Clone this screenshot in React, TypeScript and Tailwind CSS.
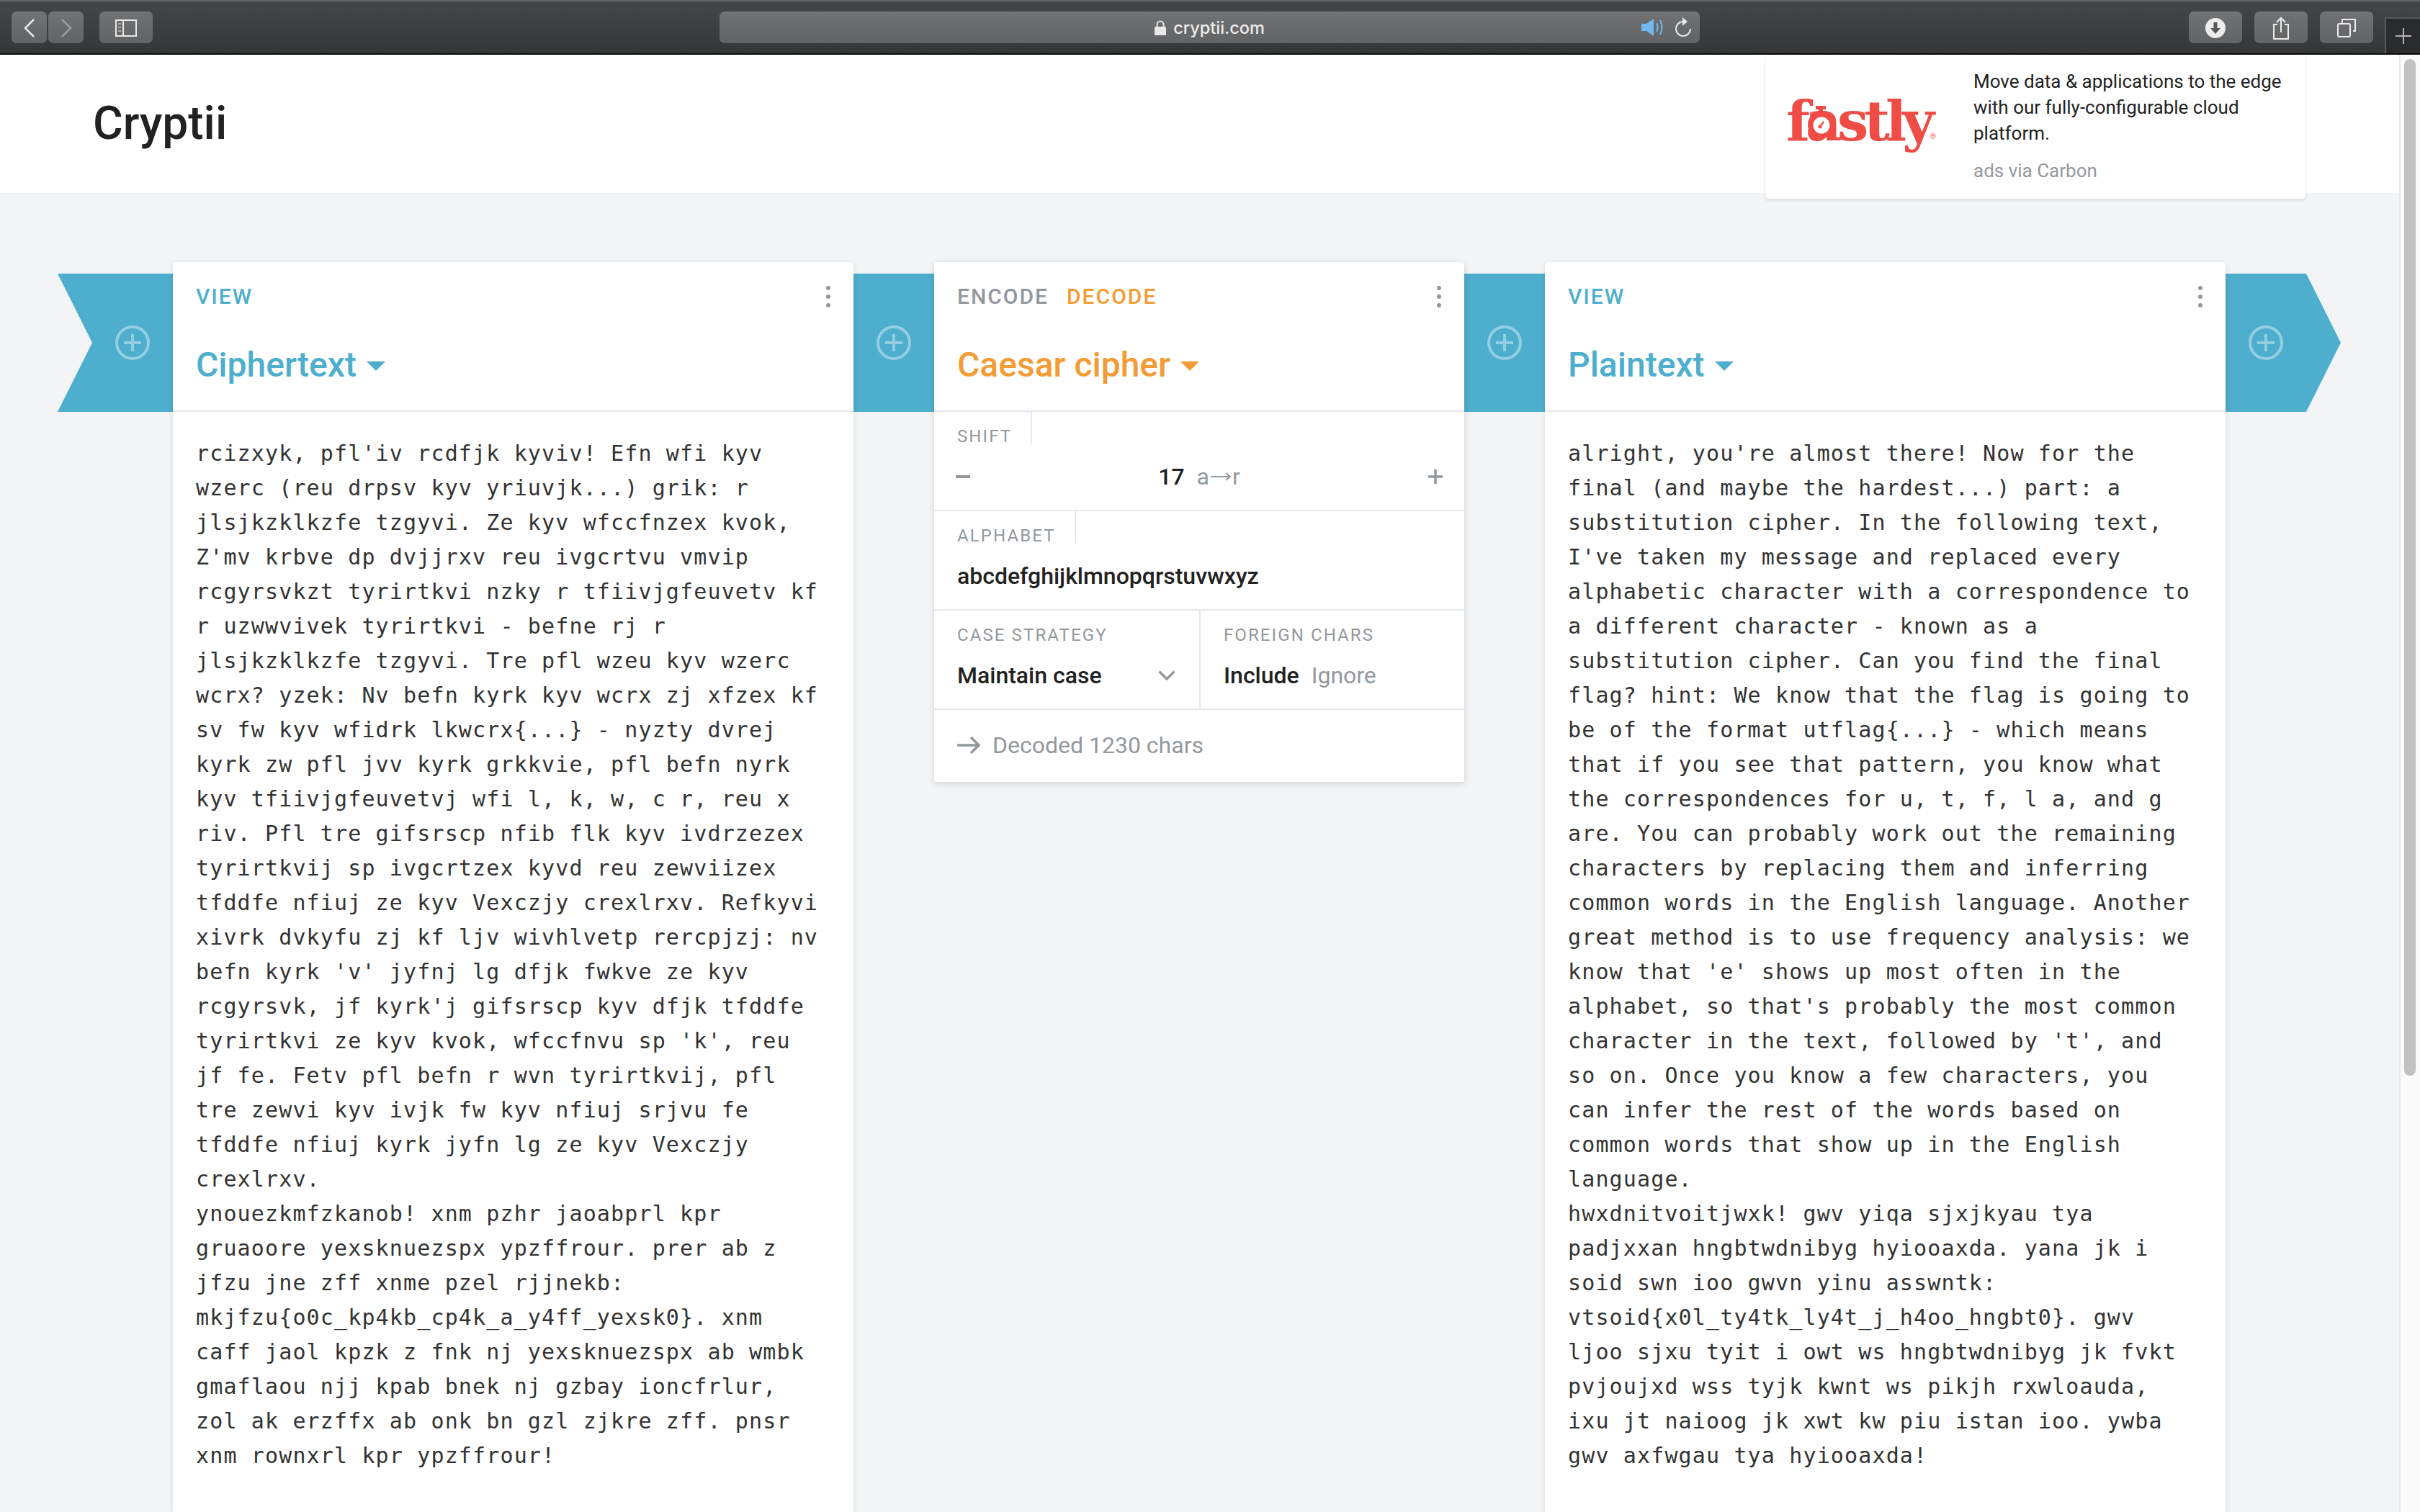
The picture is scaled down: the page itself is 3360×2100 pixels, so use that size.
import React from "react";

const CIPHER = `rcizxyk, pfl'iv rcdfjk kyviv! Efn wfi kyv wzerc (reu drpsv kyv yriuvjk...) grik: r jlsjkzklkzfe tzgyvi. Ze kyv wfccfnzex kvok, Z'mv krbve dp dvjjrxv reu ivgcrtvu vmvip rcgyrsvkzt tyrirtkvi nzky r tfiivjgfeuvetv kf r uzwwvivek tyrirtkvi - befne rj r jlsjkzklkzfe tzgyvi. Tre pfl wzeu kyv wzerc wcrx? yzek: Nv befn kyrk kyv wcrx zj xfzex kf sv fw kyv wfidrk lkwcrx{...} - nyzty dvrej kyrk zw pfl jvv kyrk grkkvie, pfl befn nyrk kyv tfiivjgfeuvetvj wfi l, k, w, c r, reu x riv. Pfl tre gifsrscp nfib flk kyv ivdrzezex tyrirtkvij sp ivgcrtzex kyvd reu zewviizex tfddfe nfiuj ze kyv Vexczjy crexlrxv. Refkyvi xivrk dvkyfu zj kf ljv wivhlvetp rercpjzj: nv befn kyrk 'v' jyfnj lg dfjk fwkve ze kyv rcgyrsvk, jf kyrk'j gifsrscp kyv dfjk tfddfe tyrirtkvi ze kyv kvok, wfccfnvu sp 'k', reu jf fe. Fetv pfl befn r wvn tyrirtkvij, pfl tre zewvi kyv ivjk fw kyv nfiuj srjvu fe tfddfe nfiuj kyrk jyfn lg ze kyv Vexczjy crexlrxv.
ynouezkmfzkanob! xnm pzhr jaoabprl kpr gruaoore yexsknuezspx ypzffrour. prer ab z jfzu jne zff xnme pzel rjjnekb: mkjfzu{o0c_kp4kb_cp4k_a_y4ff_yexsk0}. xnm caff jaol kpzk z fnk nj yexsknuezspx ab wmbk gmaflaou njj kpab bnek nj gzbay ioncfrlur, zol ak erzffx ab onk bn gzl zjkre zff. pnsr xnm rownxrl kpr ypzffrour!`;

const PLAIN = `alright, you're almost there! Now for the final (and maybe the hardest...) part: a substitution cipher. In the following text, I've taken my message and replaced every alphabetic character with a correspondence to a different character - known as a substitution cipher. Can you find the final flag? hint: We know that the flag is going to be of the format utflag{...} - which means that if you see that pattern, you know what the correspondences for u, t, f, l a, and g are. You can probably work out the remaining characters by replacing them and inferring common words in the English language. Another great method is to use frequency analysis: we know that 'e' shows up most often in the alphabet, so that's probably the most common character in the text, followed by 't', and so on. Once you know a few characters, you can infer the rest of the words based on common words that show up in the English language.
hwxdnitvoitjwxk! gwv yiqa sjxjkyau tya padjxxan hngbtwdnibyg hyiooaxda. yana jk i soid swn ioo gwvn yinu asswntk: vtsoid{x0l_ty4tk_ly4t_j_h4oo_hngbt0}. gwv ljoo sjxu tyit i owt ws hngbtwdnibyg jk fvkt pvjoujxd wss tyjk kwnt ws pikjh rxwloauda, ixu jt naioog jk xwt kw piu istan ioo. ywba gwv axfwgau tya hyiooaxda!`;

function ToolBtn({ w, children }: { w: string; children?: React.ReactNode }) {
  return (
    <div className={`${w} h-[44px] rounded-[7px] bg-gradient-to-b from-[#717274] to-[#626365] border-t border-[#7d7e80] flex items-center justify-center`}>
      {children}
    </div>
  );
}

function AddCircle() {
  return (
    <svg width="48" height="48" viewBox="0 0 48 48" fill="none" stroke="#95cee1" strokeWidth="4">
      <circle cx="24" cy="24" r="22" />
      <path d="M12 24h24M24 12v24" />
    </svg>
  );
}

function Dots() {
  return (
    <div className="flex flex-col gap-[6px]">
      <div className="w-[6px] h-[6px] rounded-full bg-[#93989c]" />
      <div className="w-[6px] h-[6px] rounded-full bg-[#93989c]" />
      <div className="w-[6px] h-[6px] rounded-full bg-[#93989c]" />
    </div>
  );
}

function Ribbon({ kind }: { kind: "start" | "mid" | "end" }) {
  if (kind === "start")
    return (
      <div className="w-[160px] h-[192px] mt-4 bg-[#4eaecd] shrink-0 flex items-center justify-end pr-[32px] [clip-path:polygon(0_0,100%_0,100%_100%,0_100%,48px_50%)]">
        <AddCircle />
      </div>
    );
  if (kind === "end")
    return (
      <div className="w-[160px] h-[192px] mt-4 bg-[#4eaecd] shrink-0 flex items-center pl-[32px] [clip-path:polygon(0_0,112px_0,100%_50%,112px_100%,0_100%)]">
        <AddCircle />
      </div>
    );
  return (
    <div className="w-[112px] h-[192px] mt-4 bg-[#4eaecd] shrink-0 flex items-center justify-center">
      <AddCircle />
    </div>
  );
}

function Caret({ color }: { color: string }) {
  return (
    <svg width="26" height="13" viewBox="0 0 26 13" className="ml-[14px] mt-[2px]">
      <path d="M0 0h26L13 13z" fill={color} />
    </svg>
  );
}

function CardHead({ top, title, color, caret }: { top: React.ReactNode; title: string; color: string; caret: string }) {
  return (
    <div className="h-[208px] border-b-2 border-[#e4e8ec] pl-8 pr-[32px] flex flex-col">
      <div className="flex items-center justify-between h-[36px] mt-[30px]">
        {top}
        <Dots />
      </div>
      <div className={`${color} flex items-center mt-[45px] text-[48px] leading-[64px] font-medium`}>
        {title}
        <Caret color={caret} />
      </div>
    </div>
  );
}

function ViewCard({ text, title }: { text: string; title: string }) {
  return (
    <div className="w-[945px] shrink-0 bg-white rounded-t-[4px] shadow-[0_2px_8px_rgba(0,0,0,0.1)] relative z-10 h-[1736px]">
      <CardHead
        top={<span className="text-[30px] leading-[36px] tracking-[2px] font-medium text-[#4eaecd]">VIEW</span>}
        title={title}
        color="text-[#4eaecd]"
        caret="#4eaecd"
      />
      <div className="px-8 pt-[34px] text-[30px] tracking-[1.14px] leading-[48px] text-[#333] whitespace-pre-wrap font-['DejaVu_Sans_Mono',monospace]">
        {text}
      </div>
    </div>
  );
}

function FieldLabel({ children, line }: { children: string; line?: boolean }) {
  return (
    <div className={`inline-block pt-4 h-[44px] pl-8 pr-[26px] text-[24px] leading-[36px] tracking-[2.1px] text-[#93989c] ${line ? "border-r-2 border-[#e4e8ec]" : ""}`}>
      {children}
    </div>
  );
}

function CipherCard() {
  return (
    <div className="w-[736px] h-[722px] shrink-0 bg-white rounded-[4px] shadow-[0_2px_8px_rgba(0,0,0,0.15)] relative z-10 flex flex-col">
      <CardHead
        top={
          <div className="flex gap-[25px] text-[30px] leading-[36px] tracking-[2px] font-medium">
            <span className="text-[#93989c]">ENCODE</span>
            <span className="text-[#f39c35]">DECODE</span>
          </div>
        }
        title="Caesar cipher"
        color="text-[#f39c35]"
        caret="#f39c35"
      />
      <div className="h-[138px] border-b-2 border-[#e4e8ec]">
        <FieldLabel line>SHIFT</FieldLabel>
        <div className="flex items-center justify-between pl-[30px] pr-[30px] h-[48px] mt-[17px] text-[32px] leading-[48px]">
          <div className="w-[20px] h-[4px] bg-[#93989c]" />
          <div className="flex items-center gap-[17px]">
            <span className="text-[#222] font-medium">17</span>
            <span className="text-[#93989c] flex items-center">
              a
              <svg width="32" height="16" viewBox="0 0 32 16" fill="none" stroke="#93989c" strokeWidth="2">
                <path d="M2 8h26M23 3l6 5-6 5" />
              </svg>
              r
            </span>
          </div>
          <svg width="20" height="20" viewBox="0 0 20 20" fill="none" stroke="#93989c" strokeWidth="3.5">
            <path d="M0 10h20M10 0v20" />
          </svg>
        </div>
      </div>
      <div className="h-[138px] border-b-2 border-[#e4e8ec]">
        <FieldLabel line>ALPHABET</FieldLabel>
        <div className="pl-8 mt-[17px] text-[32px] leading-[48px] text-[#222] font-medium">abcdefghijklmnopqrstuvwxyz</div>
      </div>
      <div className="h-[138px] border-b-2 border-[#e4e8ec] flex">
        <div className="w-[370px] border-r-2 border-[#e4e8ec]">
          <FieldLabel>CASE STRATEGY</FieldLabel>
          <div className="flex items-center justify-between pl-8 pr-[33px] mt-[17px] text-[32px] leading-[48px] text-[#222] font-medium">
            Maintain case
            <svg width="24" height="14" viewBox="0 0 24 14" fill="none" stroke="#93989c" strokeWidth="3.5">
              <path d="M1.5 1.5 12 12 22.5 1.5" />
            </svg>
          </div>
        </div>
        <div className="flex-1">
          <FieldLabel>FOREIGN CHARS</FieldLabel>
          <div className="flex pl-8 gap-[17px] mt-[17px] text-[32px] leading-[48px]">
            <span className="text-[#222] font-medium">Include</span>
            <span className="text-[#93989c]">Ignore</span>
          </div>
        </div>
      </div>
      <div className="flex-1 flex items-center pl-8 pb-[3px] gap-[17px] text-[32px] text-[#93989c]">
        <svg width="32" height="26" viewBox="0 0 32 26" fill="none" stroke="#93989c" strokeWidth="3.5">
          <path d="M0 13h30M19 2l11 11-11 11" />
        </svg>
        Decoded 1230 chars
      </div>
    </div>
  );
}

function FastlyLogo() {
  return (
    <div className="relative w-[206px] h-[90px] ml-[32px] mt-[58px] shrink-0">
      <span className="absolute left-[-3px] top-[-16px] text-[77px] leading-[100px] font-bold tracking-[-6px] text-[#ef4c45] font-['DejaVu_Serif',serif]">
        fastly
      </span>
      <span className="absolute left-[197px] top-[50px] text-[10px] leading-[12px] text-[#ef4c45]">®</span>
      <svg width="40" height="52" viewBox="0 0 40 52" className="absolute left-[25px] top-[13px]">
        <rect x="13" y="0" width="14" height="5" fill="#ef4c45" />
        <rect x="17" y="3" width="6" height="8" fill="#ef4c45" />
        <circle cx="20" cy="26" r="18" fill="#ef4c45" />
        <circle cx="21" cy="27" r="11.5" fill="#fff" />
        <path d="M19 29l5-7" stroke="#ef4c45" strokeWidth="2.5" />
        <circle cx="19" cy="29" r="2.5" fill="#ef4c45" />
      </svg>
    </div>
  );
}

export default function App() {
  return (
    <div className="w-[3360px] h-[2100px] overflow-hidden flex flex-col font-['Roboto',sans-serif] bg-[#f2f4f6]">
      {/* browser toolbar */}
      <div className="h-[76px] shrink-0 flex bg-gradient-to-b from-[#454648] to-[#353638] border-t-2 border-t-[#656667] border-b-2 border-b-[#0a0a0a] pt-[14px] pl-4">
        <div className="flex gap-[2px]">
          <ToolBtn w="w-[49px]">
            <svg width="16" height="26" viewBox="0 0 16 26" fill="none" stroke="#e8e8e8" strokeWidth="2.5">
              <path d="M14 1 2 13l12 12" />
            </svg>
          </ToolBtn>
          <ToolBtn w="w-[49px]">
            <svg width="16" height="26" viewBox="0 0 16 26" fill="none" stroke="#9a9b9d" strokeWidth="2.5">
              <path d="M2 1l12 12L2 25" />
            </svg>
          </ToolBtn>
        </div>
        <div className="ml-[22px]">
          <ToolBtn w="w-[74px]">
            <svg width="30" height="24" viewBox="0 0 30 24" fill="none" stroke="#e8e8e8" strokeWidth="2">
              <rect x="1" y="1" width="28" height="22" />
              <path d="M11 1v22" />
              <path d="M4 6h4M4 11h4M4 16h4" strokeWidth="2" stroke="#aaa" />
            </svg>
          </ToolBtn>
        </div>
        <div className="ml-[787px] w-[1361px] relative shrink-0">
          <ToolBtn w="w-full">
            <div className="flex items-center gap-[10px] text-[#ececec] text-[23.5px] font-['Inter',sans-serif] font-medium leading-none">
              <svg width="16" height="21" viewBox="0 0 16 21">
                <path d="M3.5 9V6a4.5 4.5 0 0 1 9 0v3" fill="none" stroke="#e8e8e8" strokeWidth="2" />
                <rect x="0" y="9" width="16" height="12" rx="1" fill="#e8e8e8" />
              </svg>
              cryptii.com
            </div>
          </ToolBtn>
          <div className="absolute right-[11px] top-[8px] flex items-center gap-[12px]">
            <svg width="34" height="26" viewBox="0 0 34 26" fill="none">
              <path d="M0 8h7l10-7v24L7 18H0z" fill="#6fb9f0" />
              <path d="M21 7q3 6 0 12M26 3q5 10 0 20" stroke="#6fb9f0" strokeWidth="2" />
            </svg>
            <svg width="24" height="28" viewBox="0 0 24 28" fill="none" stroke="#e8e8e8" strokeWidth="2">
              <path d="M12 6a10 10 0 1 0 10 10" />
              <path d="M11 0l7 6-7 6" fill="#e8e8e8" stroke="none" />
            </svg>
          </div>
        </div>
        <div className="ml-[679px] flex gap-[17px] shrink-0">
          <ToolBtn w="w-[74px]">
            <svg width="28" height="28" viewBox="0 0 28 28">
              <circle cx="14" cy="14" r="14" fill="#ececec" />
              <path d="M11.5 6h5v8H21l-7 8-7-8h4.5z" fill="#555" />
            </svg>
          </ToolBtn>
          <ToolBtn w="w-[74px]">
            <svg width="24" height="32" viewBox="0 0 24 32" fill="none" stroke="#ececec" strokeWidth="2">
              <path d="M7 11H2v20h20V11h-5M12 22V2M6 8l6-6 6 6" />
            </svg>
          </ToolBtn>
          <ToolBtn w="w-[74px]">
            <svg width="26" height="26" viewBox="0 0 26 26" fill="none" stroke="#ececec" strokeWidth="2">
              <rect x="1" y="7" width="17" height="18" rx="2" />
              <path d="M7 7V1h18v16h-3" />
            </svg>
          </ToolBtn>
        </div>
        <div className="ml-[16px] flex-1 mt-[8px] bg-[#2a2b2d] border-l-2 border-t-2 border-[#59595b] flex items-center justify-center">
          <svg width="22" height="22" viewBox="0 0 22 22" stroke="#b5b5b5" strokeWidth="2">
            <path d="M0 11h22M11 0v22" />
          </svg>
        </div>
      </div>

      <div className="flex-1 min-h-0 flex">
        <div className="flex-1 min-w-0 flex flex-col">
          {/* site header */}
          <div className="h-[192px] shrink-0 bg-white flex justify-between pl-[129px] pr-[130px]">
            <h1 className="text-[64px] font-medium text-[#222] leading-[192px]">Cryptii</h1>
            <div className="w-[750px] h-[200px] bg-white shadow-[0_2px_4px_rgba(0,0,0,0.12)] rounded-b-[4px] flex relative z-20">
              <FastlyLogo />
              <div className="ml-[51px] pt-[19px]">
                <p className="text-[26px] leading-[36px] text-[#222] w-[440px]">
                  Move data &amp; applications to the edge with our fully-configurable cloud platform.
                </p>
                <p className="text-[26px] leading-[36px] mt-[16px] text-[#93989c]">ads via Carbon</p>
              </div>
            </div>
          </div>
          {/* pipeline */}
          <div className="flex pl-[80px] pt-[96px] items-start">
            <Ribbon kind="start" />
            <ViewCard text={CIPHER} title="Ciphertext" />
            <Ribbon kind="mid" />
            <CipherCard />
            <Ribbon kind="mid" />
            <ViewCard text={PLAIN} title="Plaintext" />
            <Ribbon kind="end" />
          </div>
        </div>
        {/* scrollbar */}
        <div className="w-[29px] shrink-0 bg-[#fafafa] border-l-2 border-[#e8e8e8] pl-[5px] pt-[6px]">
          <div className="w-[16px] h-[1412px] rounded-full bg-[#c1c1c1]" />
        </div>
      </div>
    </div>
  );
}
